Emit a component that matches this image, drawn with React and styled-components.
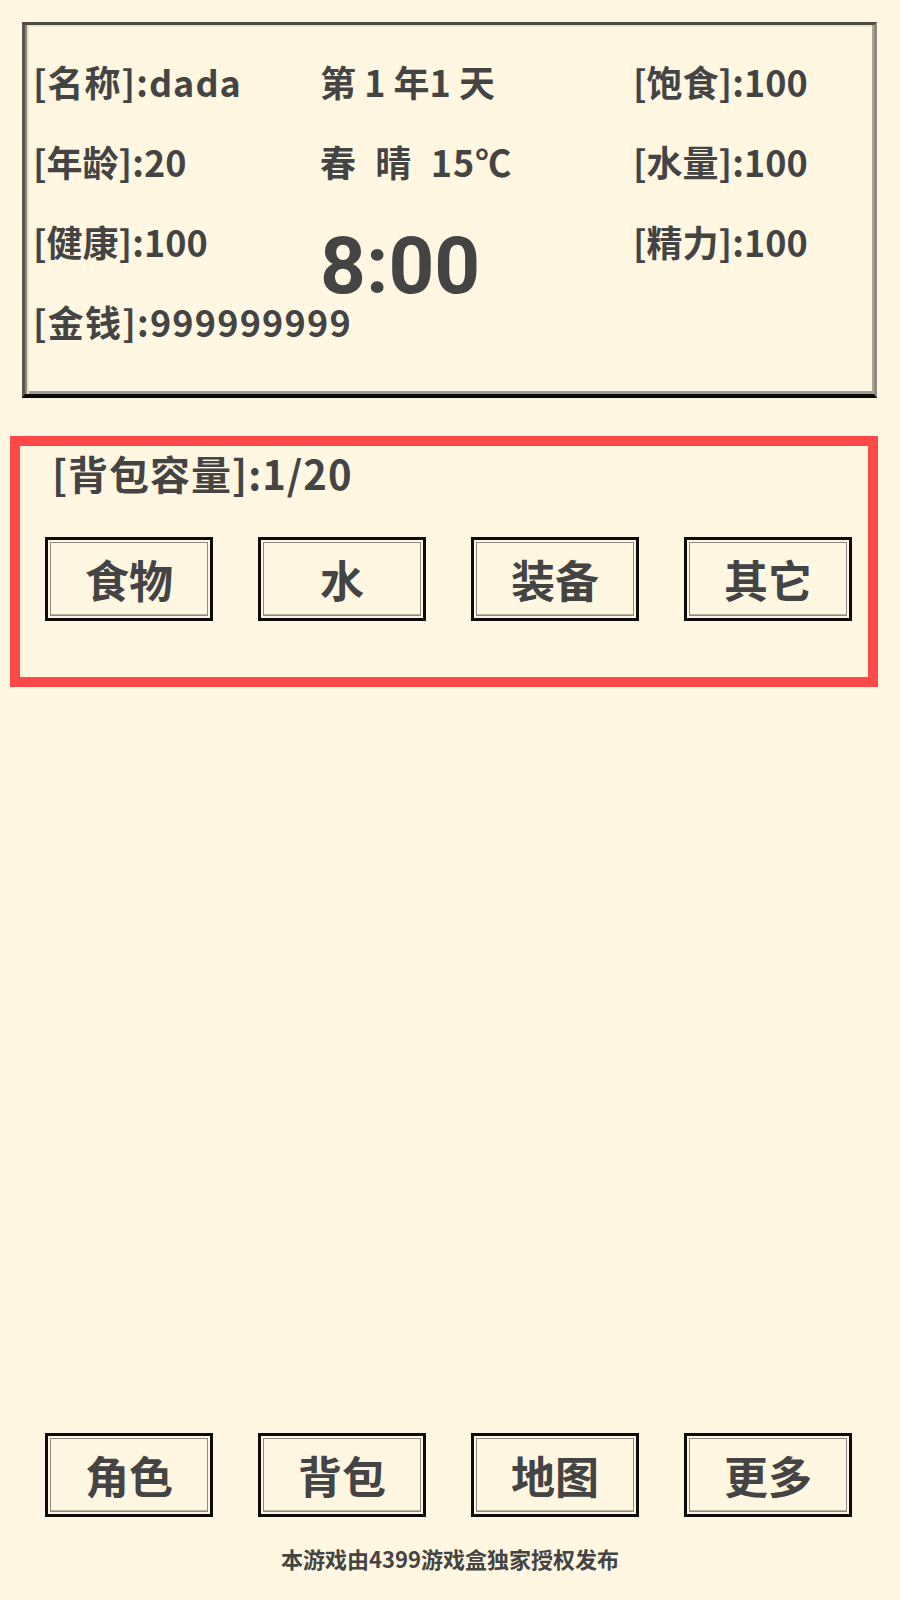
import React from 'react';
import styled, {createGlobalStyle} from 'styled-components';

// 页面底色 / 字体
const GlobalStyle = createGlobalStyle`
    html, body {
        margin: 0;
        padding: 0;
        background: #fff7e1;
    }
    body {
        font-family: "Noto Sans CJK SC", "Noto Sans", sans-serif;
        color: #444;
    }
`;

const Page = styled.div`
    display: flex;
    flex-direction: column;
    height: 1600px;
    background: #fff7e1;
`;

// 顶部状态面板
const StatusPanel = styled.section`
    box-sizing: border-box;
    margin: 22px 23px 0 22px;
    height: 376px;
    padding: 16px 0 0 8px;
    display: grid;
    grid-template-columns: 287px 313px 1fr;
    border-top: 3px solid #4e4a42;
    border-left: 3px solid #5c574e;
    border-right: 3px solid #8f8a80;
    border-bottom: 4px solid #0c0c0c;
    box-shadow:
        inset 2px 0 0 #8a857a,
        inset 4px 0 0 #e9e2cc,
        inset -2px 0 0 #aaa59b,
        inset 0 -3px 0 #a09b90,
        inset 0 2px 0 #ece5d0;
`;

const Column = styled.div`
    display: flex;
    flex-direction: column;
`;

const Stat = styled.div`
    height: 80px;
    font-size: 36px;
    line-height: 80px;
    font-weight: 700;
    white-space: nowrap;
    letter-spacing: ${(p) => p.$spacing || '0'};
`;

const Clock = styled.div`
    margin-top: 25px;
    font-family: Roboto, "Noto Sans CJK SC", sans-serif;
    font-size: 80px;
    line-height: 80px;
    font-weight: 700;
`;

// 背包区域
const BagBox = styled.section`
    box-sizing: border-box;
    margin: 38px 0 0 10px;
    width: 868px;
    height: 251px;
    border: 10px solid #ff4848;
    padding: 3px 0 0 25px;
`;

const BagTitle = styled.div`
    font-size: 40px;
    line-height: 48px;
    font-weight: 700;
    letter-spacing: 1px;
    padding-left: 7px;
`;

const ButtonRow = styled.div`
    display: flex;
    gap: 45px;
    margin-top: ${(p) => p.$top || '0'};
    padding-left: ${(p) => p.$left || '0'};
`;

const GameButton = styled.button`
    box-sizing: border-box;
    width: 168px;
    height: 84px;
    padding: 0;
    border: 3px solid #0c0c0c;
    background: #fff7e1;
    box-shadow:
        inset 0 0 0 2px #fff7e1,
        inset 0 0 0 3px #8d8a84,
        inset 0 -4px 0 #b3b0a8;
    font-family: inherit;
    font-size: 44px;
    font-weight: 700;
    color: #444;
    cursor: pointer;
`;

const BottomNav = styled.nav`
    margin-top: auto;
`;

const Footer = styled.footer`
    margin-top: 26px;
    padding-bottom: 27px;
    text-align: center;
    font-size: 22px;
    line-height: 30px;
    font-weight: 700;
`;

const leftStats = [
    {text: '[名称]:dada', spacing: '1px'},
    {text: '[年龄]:20'},
    {text: '[健康]:100'},
    {text: '[金钱]:999999999', spacing: '1.2px'},
];
const rightStats = ['[饱食]:100', '[水量]:100', '[精力]:100'];
const bagTabs = ['食物', '水', '装备', '其它'];
const navTabs = ['角色', '背包', '地图', '更多'];

const App = () => {
    return (
        <Page>
            <GlobalStyle />
            <StatusPanel>
                <Column>
                    {leftStats.map((s) => (
                        <Stat key={s.text} $spacing={s.spacing}>{s.text}</Stat>
                    ))}
                </Column>
                <Column>
                    <Stat>第 1 年1 天</Stat>
                    <Stat $spacing="1px">春&nbsp;&nbsp;晴&nbsp;&nbsp;15℃</Stat>
                    <Clock>8:00</Clock>
                </Column>
                <Column>
                    {rightStats.map((s) => (
                        <Stat key={s}>{s}</Stat>
                    ))}
                </Column>
            </StatusPanel>

            <BagBox>
                <BagTitle>[背包容量]:1/20</BagTitle>
                <ButtonRow $top="40px">
                    {bagTabs.map((t) => (
                        <GameButton key={t}>{t}</GameButton>
                    ))}
                </ButtonRow>
            </BagBox>

            <BottomNav>
                <ButtonRow $left="45px">
                    {navTabs.map((t) => (
                        <GameButton key={t}>{t}</GameButton>
                    ))}
                </ButtonRow>
            </BottomNav>
            <Footer>本游戏由4399游戏盒独家授权发布</Footer>
        </Page>
    );
};

export default App;
